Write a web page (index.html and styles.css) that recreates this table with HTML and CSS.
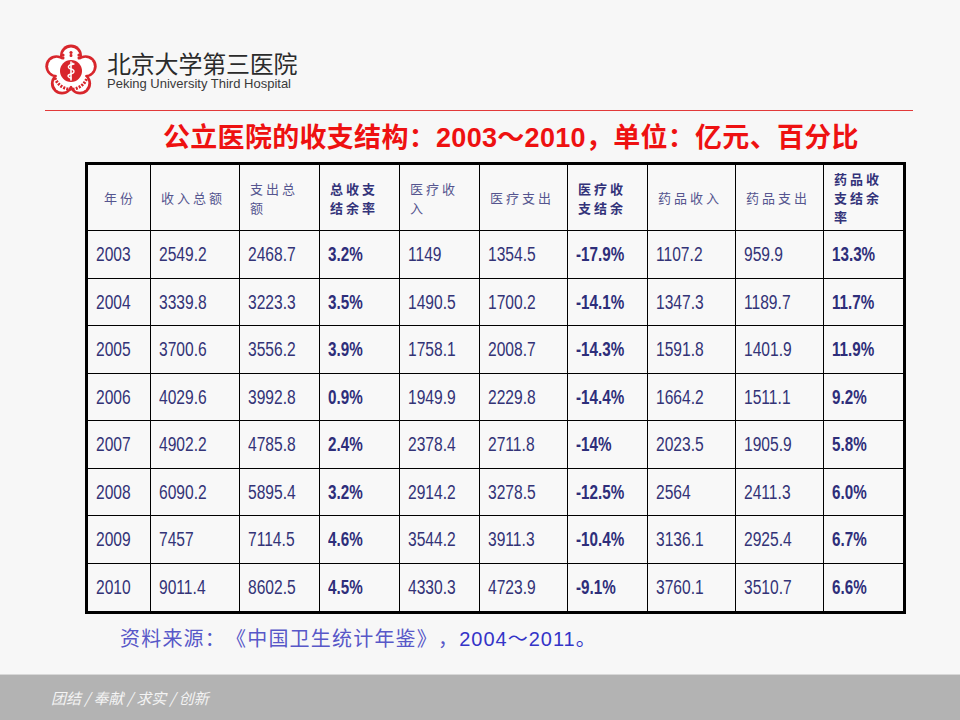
FILE: index.html
```html
<!DOCTYPE html>
<html lang="zh">
<head>
<meta charset="utf-8">
<title>公立医院的收支结构</title>
<link rel="stylesheet" href="styles.css">
</head>
<body>
<div class="page">
  <header class="brand">
    <svg class="logo" width="54" height="54" viewBox="0 0 54 54" aria-hidden="true">
      <g fill="#d8262c">
        <circle cx="27" cy="27" r="17"/>
        <circle cx="27" cy="11.5" r="11"/>
        <circle cx="41.7" cy="22.2" r="11"/>
        <circle cx="36.1" cy="39.5" r="11"/>
        <circle cx="17.9" cy="39.5" r="11"/>
        <circle cx="12.3" cy="22.2" r="11"/>
      </g>
      <g fill="#ffffff">
        <circle cx="27" cy="27" r="15"/>
        <circle cx="27" cy="12" r="8.6"/>
        <circle cx="41.3" cy="22.4" r="8.6"/>
        <circle cx="35.8" cy="39.1" r="8.6"/>
        <circle cx="18.2" cy="39.1" r="8.6"/>
        <circle cx="12.7" cy="22.4" r="8.6"/>
      </g>
      <g fill="#d8262c">
        <circle cx="19" cy="11" r="1.6"/>
        <circle cx="27" cy="8.5" r="1.6"/>
        <circle cx="35" cy="11" r="1.6"/>
        <rect x="17.6" y="12.4" width="2.8" height="3" rx="1"/>
        <rect x="25.6" y="10" width="2.8" height="3" rx="1"/>
        <rect x="33.6" y="12.4" width="2.8" height="3" rx="1"/>
      </g>
      <path d="M11 34 A17 17 0 0 0 43 34" fill="none" stroke="#d8262c" stroke-width="3" stroke-dasharray="2 1.2"/>
      <circle cx="27" cy="27" r="11" fill="#d8262c"/>
      <g stroke="#ffffff" fill="none" stroke-linecap="round">
        <line x1="27" y1="18" x2="27" y2="36" stroke-width="1.6"/>
        <path d="M30 20 C23 21, 23 24, 27 25 S31 29, 27 30 S23 33, 27 34" stroke-width="1.3"/>
        <circle cx="28.5" cy="19.5" r="1" fill="#ffffff" stroke="none"/>
      </g>
    </svg>
    <div class="brand-text">
      <div class="brand-cn">北京大学第三医院</div>
      <div class="brand-en">Peking University Third Hospital</div>
    </div>
  </header>
  <div class="rule"></div>
  <h1 class="title">公立医院的收支结构：2003～2010，单位：亿元、百分比</h1>
  <div class="table-wrap">
    <table class="data">
      <colgroup>
        <col class="w63"><col class="w89"><col class="w80"><col class="w80"><col class="w80">
        <col class="w88"><col class="w80"><col class="w88"><col class="w88"><col class="w79">
      </colgroup>
      <thead>
        <tr>
          <th class="first">年份</th>
          <th>收入总额</th>
          <th>支出总<br>额</th>
          <th class="strong">总收支<br>结余率</th>
          <th>医疗收<br>入</th>
          <th>医疗支出</th>
          <th class="strong">医疗收<br>支结余</th>
          <th>药品收入</th>
          <th>药品支出</th>
          <th class="strong last">药品收<br>支结余<br>率</th>
        </tr>
      </thead>
      <tbody>
        <tr><td><span class="n">2003</span></td><td><span class="n">2549.2</span></td><td><span class="n">2468.7</span></td><td class="b"><span class="n">3.2%</span></td><td><span class="n">1149</span></td><td><span class="n">1354.5</span></td><td class="b"><span class="n">-17.9%</span></td><td><span class="n">1107.2</span></td><td><span class="n">959.9</span></td><td class="b last"><span class="n">13.3%</span></td></tr>
        <tr><td><span class="n">2004</span></td><td><span class="n">3339.8</span></td><td><span class="n">3223.3</span></td><td class="b"><span class="n">3.5%</span></td><td><span class="n">1490.5</span></td><td><span class="n">1700.2</span></td><td class="b"><span class="n">-14.1%</span></td><td><span class="n">1347.3</span></td><td><span class="n">1189.7</span></td><td class="b last"><span class="n">11.7%</span></td></tr>
        <tr><td><span class="n">2005</span></td><td><span class="n">3700.6</span></td><td><span class="n">3556.2</span></td><td class="b"><span class="n">3.9%</span></td><td><span class="n">1758.1</span></td><td><span class="n">2008.7</span></td><td class="b"><span class="n">-14.3%</span></td><td><span class="n">1591.8</span></td><td><span class="n">1401.9</span></td><td class="b last"><span class="n">11.9%</span></td></tr>
        <tr><td><span class="n">2006</span></td><td><span class="n">4029.6</span></td><td><span class="n">3992.8</span></td><td class="b"><span class="n">0.9%</span></td><td><span class="n">1949.9</span></td><td><span class="n">2229.8</span></td><td class="b"><span class="n">-14.4%</span></td><td><span class="n">1664.2</span></td><td><span class="n">1511.1</span></td><td class="b last"><span class="n">9.2%</span></td></tr>
        <tr><td><span class="n">2007</span></td><td><span class="n">4902.2</span></td><td><span class="n">4785.8</span></td><td class="b"><span class="n">2.4%</span></td><td><span class="n">2378.4</span></td><td><span class="n">2711.8</span></td><td class="b"><span class="n">-14%</span></td><td><span class="n">2023.5</span></td><td><span class="n">1905.9</span></td><td class="b last"><span class="n">5.8%</span></td></tr>
        <tr><td><span class="n">2008</span></td><td><span class="n">6090.2</span></td><td><span class="n">5895.4</span></td><td class="b"><span class="n">3.2%</span></td><td><span class="n">2914.2</span></td><td><span class="n">3278.5</span></td><td class="b"><span class="n">-12.5%</span></td><td><span class="n">2564</span></td><td><span class="n">2411.3</span></td><td class="b last"><span class="n">6.0%</span></td></tr>
        <tr><td><span class="n">2009</span></td><td><span class="n">7457</span></td><td><span class="n">7114.5</span></td><td class="b"><span class="n">4.6%</span></td><td><span class="n">3544.2</span></td><td><span class="n">3911.3</span></td><td class="b"><span class="n">-10.4%</span></td><td><span class="n">3136.1</span></td><td><span class="n">2925.4</span></td><td class="b last"><span class="n">6.7%</span></td></tr>
        <tr class="lastrow"><td><span class="n">2010</span></td><td><span class="n">9011.4</span></td><td><span class="n">8602.5</span></td><td class="b"><span class="n">4.5%</span></td><td><span class="n">4330.3</span></td><td><span class="n">4723.9</span></td><td class="b"><span class="n">-9.1%</span></td><td><span class="n">3760.1</span></td><td><span class="n">3510.7</span></td><td class="b last"><span class="n">6.6%</span></td></tr>
      </tbody>
    </table>
  </div>
  <p class="source"><span class="src-cn">资料来源：《中国卫生统计年鉴》，</span><span class="src-num">2004～2011。</span></p>
  <footer class="footer">团结 / 奉献 / 求实 / 创新</footer>
</div>
</body>
</html>
```
FILE: styles.css
```css
html, body {
  margin: 0;
  padding: 0;
  background: #f7f7f7;
}

.page {
  width: 960px;
  height: 720px;
  display: flex;
  flex-direction: column;
  background: #f7f7f7;
  font-family: "Liberation Sans", "Noto Sans CJK SC", sans-serif;
  overflow: hidden;
  text-spacing-trim: space-all;
}

.brand {
  display: flex;
  align-items: center;
  gap: 9px;
  padding: 44px 0 0 44px;
  height: 53px;
}

.logo {
  display: block;
  flex: none;
}

.brand-text {
  display: flex;
  flex-direction: column;
}

.brand-cn {
  font-family: "Noto Sans CJK SC", sans-serif;
  font-size: 24px;
  line-height: 26px;
  color: #2b2b2b;
  font-weight: 400;
  letter-spacing: -0.2px;
}

.brand-en {
  font-family: "Liberation Sans", Arial, sans-serif;
  font-size: 13px;
  line-height: 15px;
  color: #3a3a3a;
}

.rule {
  margin: 13px 47px 0 45px;
  height: 1px;
  background: #e23a3a;
}

.title {
  margin: 7px 0 0 0;
  padding-left: 163px;
  font-family: "Liberation Sans", "Noto Sans CJK SC", sans-serif;
  font-size: 27px;
  line-height: 40px;
  font-weight: 700;
  color: #ee1111;
  letter-spacing: 0.3px;
}

.table-wrap {
  margin-top: 4px;
  padding-left: 85px;
}

.data {
  width: 821px;
  table-layout: fixed;
  border-collapse: separate;
  border-spacing: 0;
  border: 3px solid #000;
  background: #f8f8f8;
}

.w63 { width: 63px; }
.w79 { width: 79px; }
.w80 { width: 80px; }
.w88 { width: 88px; }
.w89 { width: 89px; }

.data th,
.data td {
  box-sizing: border-box;
  border-right: 1px solid #000;
  border-bottom: 1px solid #000;
  text-align: left;
  vertical-align: middle;
  padding: 0 0 0 8px;
  white-space: nowrap;
}

.data th.last,
.data td.last {
  border-right: none;
}

.data .lastrow td {
  border-bottom: none;
}

.data thead tr {
  height: 66px;
}

.data th {
  font-family: "Noto Sans CJK SC", sans-serif;
  font-size: 13px;
  line-height: 19px;
  font-weight: 400;
  letter-spacing: 3px;
  color: #55558f;
  padding-left: 10px;
}

.data th.first {
  padding-left: 16px;
}

.data th.strong {
  font-weight: 700;
  color: #33337a;
}

.data tbody tr {
  height: 47.5px;
}

.data td {
  font-family: "Liberation Sans", Arial, sans-serif;
  font-size: 19.5px;
  line-height: 22px;
  color: #333377;
}

.n {
  display: inline-block;
  transform: scaleX(0.8);
  transform-origin: 0 50%;
}

.data td.b {
  font-weight: 700;
  color: #2e2e7a;
}

.data td.b .n {
  transform: scaleX(0.78);
}

.source {
  margin: 10px 0 0 0;
  padding-left: 120px;
  font-size: 20px;
  line-height: 28px;
}

.src-cn {
  font-family: "Noto Sans CJK SC", sans-serif;
  color: #5858c8;
  font-weight: 400;
  letter-spacing: 1.2px;
}

.src-num {
  font-family: "Liberation Sans", "Noto Sans CJK SC", sans-serif;
  color: #3434c8;
  letter-spacing: 1px;
}

.footer {
  margin-top: auto;
  height: 46px;
  box-sizing: border-box;
  background: #b3b3b3;
  border-top: 1px solid #d8d8d8;
  padding-left: 51px;
  display: flex;
  align-items: center;
  font-family: "Noto Sans CJK SC", sans-serif;
  font-style: italic;
  font-size: 15px;
  color: #f4f4f4;
}
```
